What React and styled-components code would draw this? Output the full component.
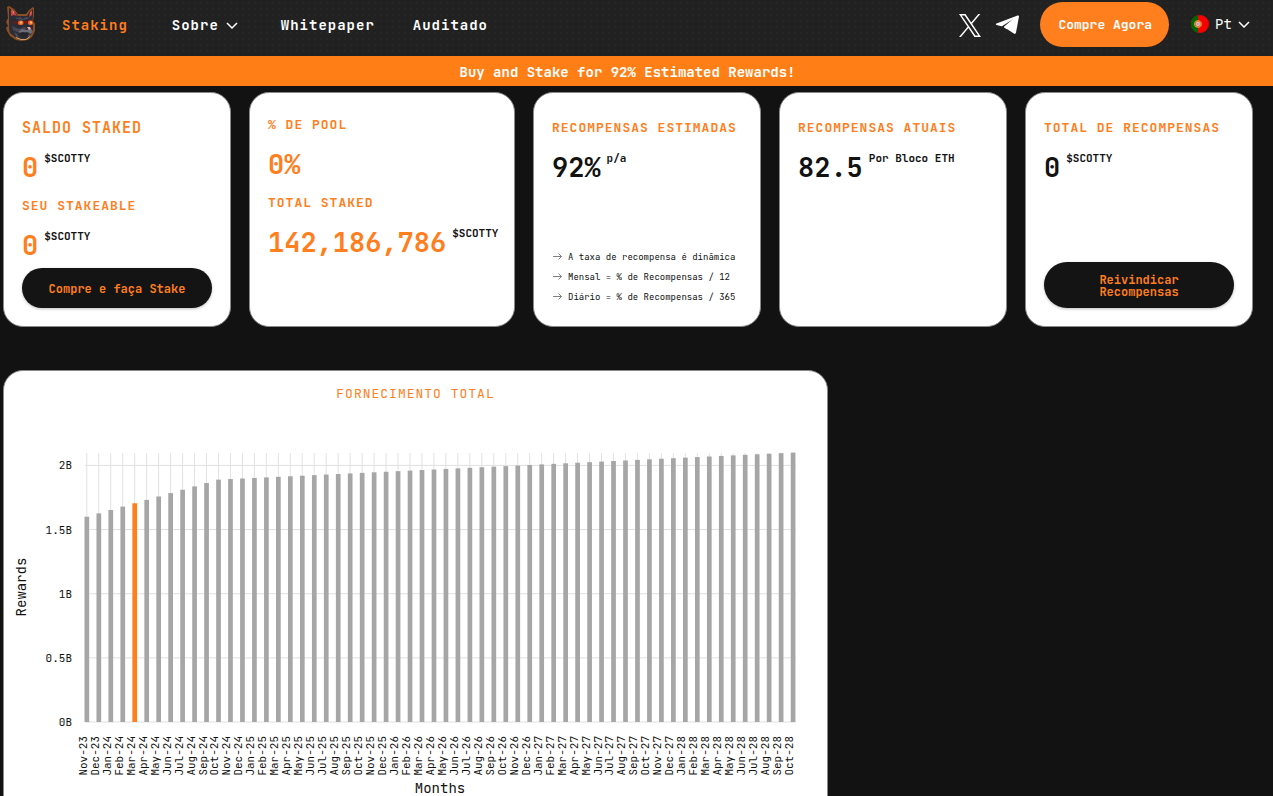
import * as React from "react"
import styled, { createGlobalStyle } from "styled-components"

const GlobalStyle = createGlobalStyle`
    * {
        box-sizing: border-box;
    }
    body {
        margin: 0;
        background: #121212;
        font-family: "JetBrains Mono", "DejaVu Sans Mono", monospace;
        color: #121212;
    }
    button, select {
        font-family: inherit;
        border: none;
        cursor: pointer;
    }
`

const Header = styled.header`
    display: flex;
    align-items: center;
    justify-content: space-between;
    height: 56px;
    padding: 0 23px 8px 4px;
    background-color: #212121;
    background-image: radial-gradient(circle, #262626 1px, transparent 1px);
    background-size: 6px 6px;
`

const Nav = styled.nav`
    display: flex;
    align-items: center;
    gap: 38px;
`

const LogoLink = styled.a`
    display: flex;
    margin-right: -14px;
`

const NavLink = styled.a`
    padding-top: 2px;
    color: ${props => props.$active ? "#ff7e1d" : "white"};
    font-size: 14px;
    font-weight: bold;
    letter-spacing: 1px;
    text-decoration: none;
`

const NavMenu = styled.button`
    display: flex;
    align-items: center;
    gap: 7px;
    padding: 2px 5px 0 6px;
    background: none;
    color: white;
    font-size: 14px;
    font-weight: bold;
    letter-spacing: 1px;
`

const HeaderRight = styled.div`
    display: flex;
    align-items: center;
`

const SocialLink = styled.a`
    display: flex;
    margin-right: 14px;
    padding-top: 2px;
    color: white;
`

const BuyButton = styled.button`
    height: 45px;
    margin: 0 22px 0 6px;
    padding: 0 17px 0 18px;
    border-radius: 24px;
    background: #ff7e1d;
    color: white;
    font-size: 13px;
    font-weight: bold;
`

const Language = styled.label`
    display: flex;
    align-items: center;
    gap: 6px;
    color: white;
`

const LanguageSelect = styled.select`
    appearance: none;
    padding: 0;
    background: none;
    color: white;
    font-size: 14px;
    option {
        color: #121212;
    }
`

const Banner = styled.div`
    height: 30px;
    padding: 1px 18px 0 0;
    background: #ff7f16;
    color: white;
    font-size: 14px;
    font-weight: bold;
    line-height: 30px;
    text-align: center;
`

const Content = styled.main`
    padding: 6px 20px 0 3px;
`

const Cards = styled.div`
    display: grid;
    grid-template-columns: minmax(0, 6fr) minmax(0, 7fr) repeat(3, minmax(0, 6fr));
    gap: 18px;
    @media (max-width: 1080px) {
        grid-template-columns: repeat(auto-fit, minmax(266px, 1fr));
    }
`

const Card = styled.section`
    display: flex;
    flex-direction: column;
    padding: ${props => props.$raised ? "22px" : "25px"} 18px 18px;
    border: 1px solid #8a8a8a;
    border-radius: 20px;
    background: white;
`

const Stack = styled.div`
    display: flex;
    flex-direction: column;
    gap: 10px;
    margin-bottom: 4px;
`

const Label = styled.h2`
    margin: 0;
    color: #ff7e1d;
    font-size: ${props => props.$large ? "15px" : "13px"};
    font-weight: bold;
    letter-spacing: 1px;
    line-height: 20px;
    white-space: nowrap;
`

const Amount = styled.div`
    display: flex;
    align-items: flex-start;
    gap: 6px;
    color: ${props => props.$dark ? "#121212" : "#ff7e1d"};
    font-size: 27px;
    font-weight: bold;
    line-height: 38px;
`

const Unit = styled.span`
    color: #121212;
    font-size: 11px;
    line-height: 20px;
    white-space: nowrap;
`

const CardButton = styled.button`
    width: 100%;
    min-height: 40px;
    margin-top: auto;
    padding: ${props => props.$tall ? "12px 40px 10px" : "1px 0 0"};
    border-radius: 24px;
    background: #141414;
    color: #ff7e1d;
    box-shadow: 0 1px 3px rgba(0, 0, 0, 0.25);
    font-size: 12px;
    font-weight: bold;
    line-height: 12px;
`

const Notes = styled.ul`
    margin: auto 0 0;
    padding: 0 0 1px;
    list-style: none;
`

const Note = styled.li`
    display: flex;
    align-items: center;
    gap: 5px;
    font-size: 9px;
    line-height: 20px;
    white-space: nowrap;
`

const ChartCard = styled.section`
    width: 66%;
    margin-top: 43px;
    border: 1px solid #8a8a8a;
    border-radius: 20px;
    background: white;
`

const ChartTitle = styled.h2`
    margin: 0;
    padding-top: 13px;
    color: #ff7e1d;
    font-size: 13px;
    font-weight: normal;
    letter-spacing: 1px;
    line-height: 20px;
    text-align: center;
`

const ChartSvg = styled.svg`
    display: block;
    width: 100%;
    font-size: 11px;
    fill: #121212;
`

const AxisName = styled.text`
    font-size: 14px;
`

const MONTHS = ["Jan", "Feb", "Mar", "Apr", "May", "Jun", "Jul", "Aug", "Sep", "Oct", "Nov", "Dec"]
const CURRENT_MONTH = "Mar-24"

// supply grows fast during the first year, then slowly up to 2.1B
const supply = Array.from({ length: 60 }, (_, i) => {
    const month = i + 10
    return {
        name: `${MONTHS[month % 12]}-${23 + Math.floor(month / 12)}`,
        value: i <= 11 ? 1.6 + (0.289 * i) / 11 : 1.889 + (0.211 * (i - 11)) / 48,
    }
})

const PLOT = { left: 81, right: 792, top: 49, bottom: 318 }
const BILLION = 128.3
const STEP = 11.97
const barX = i => 82.8 + i * STEP
const valueY = v => PLOT.bottom - v * BILLION

const SupplyChart = () => (
    <ChartSvg viewBox="0 0 823 420" role="img" aria-label="Fornecimento total">
        {supply.map((m, i) => (
            <line key={m.name} x1={barX(i)} x2={barX(i)} y1={PLOT.top} y2={PLOT.bottom} stroke="#e2e2e2" />
        ))}
        {[0, 0.5, 1, 1.5, 2].map(v => (
            <g key={v}>
                <line x1={PLOT.left} x2={PLOT.right} y1={valueY(v)} y2={valueY(v)} stroke="#e0e0e0" />
                <text x="68" y={valueY(v) + 4} textAnchor="end">{v}B</text>
            </g>
        ))}
        {supply.map((m, i) => (
            <g key={m.name}>
                <rect
                    x={barX(i) - 2.3}
                    y={valueY(m.value)}
                    width="4.7"
                    height={m.value * BILLION}
                    fill={m.name === CURRENT_MONTH ? "#ff7e1d" : "#a6a6a6"}
                />
                <text transform={`translate(${barX(i)} 332) rotate(-90)`} textAnchor="end">{m.name}</text>
            </g>
        ))}
        <AxisName transform="translate(22 183) rotate(-90)" textAnchor="middle">Rewards</AxisName>
        <AxisName x="436" y="389" textAnchor="middle">Months</AxisName>
    </ChartSvg>
)

const Logo = () => (
    <svg width="34" height="40" viewBox="4 4 34 40">
        <path d="M7 7l2-1 5 3 4 5h8l3-4 4-3 1 1v8l-1 4 2 4v7l-3 6-4 3-6 1-6-1-6-4-3-5-1-3 2-2-2-4 2-4z" fill="#8a4f22" />
        <path d="M9 8l5 3 4 5h9l3-5 3-2v8l-1 5 1 4v5l-3 5-4 3h-5l-6-2-5-4-1-4V18z" fill="#2c2c36" />
        <path d="M11 9l3 2 3 5-3-1-3 1zM32 10l-2 2-1 5 3-2z" fill="#c8423f" />
        <path d="M12 10l2 2v2zM31.500 11l-1 2v2z" fill="#ff9d8e" />
        <path d="M15 17l3 1 2-1 3 2 3-2 4 1-3 1-4 1-6-1z" fill="#4b4b58" />
        <path d="M12 26l4 2 4 1 4-2 3 1-4 3-6 1-4-2z" fill="#484855" />
        <path d="M12 21l5 1 14-2 3 1-1 2-6 1-3-1-3 2-5-1-4-2z" fill="#6b1b12" />
        <rect x="18" y="20.500" width="5.500" height="4.500" rx="2" fill="#ee6526" />
        <rect x="28" y="20.500" width="5" height="4.500" rx="2" fill="#ee6526" />
        <path d="M20 21.500h2v2h-2zM30 21.500h2v2h-2z" fill="#ffb983" />
        <path d="M18 32l4-3 4 1 5-1 2 2-2 3-4-2-5 2z" fill="#6d6c78" />
        <path d="M19 33l4-1 5 1-2 4-5-1z" fill="#25252d" />
        <path d="M14 32l3 2 2 4-3-2zM28 35l3-1-2 4z" fill="#515160" />
        <path d="M27 27h3l1 2-2 1z" fill="#f2aaa6" />
        <path d="M16 37.500l5 2h5l4-3" fill="none" stroke="#cf9a6c" />
    </svg>
)

const Chevron = () => (
    <svg width="12" height="8" viewBox="0 0 12 8" fill="none" stroke="white" strokeWidth="1.5">
        <path d="M1 2l5 5 5-5" />
    </svg>
)

const XLogo = () => (
    <svg width="22" height="23" viewBox="0 0 300 300" preserveAspectRatio="none" fill="currentColor">
        <path d="M178.57 127.15L290.27 0h-26.46l-97.03 110.38L89.34 0H0l117.13 166.93L0 300h26.46l102.4-116.34L210.66 300H300zM36.01 19.54h40.65l187.13 262.13h-40.66z" />
    </svg>
)

const TelegramLogo = () => (
    <svg width="25" height="20" viewBox="0 0 25 20" fill="currentColor">
        <path d="M22.600.500q1.600-.5 1.400 1.100L21 17.600q-.5 2-2.200.9L9.300 12.300q-.4-.5.100-1L18.200 4 7.400 11.100q-.5.3-1 .2L1.500 9.900q-1.400-.7 0-1.400z" />
        <path d="M9 12.400l9.200-8.200L12 14.300z" />
    </svg>
)

const Flag = () => (
    <svg width="18" height="18" viewBox="0 0 18 18">
        <circle cx="9" cy="9" r="9" fill="#f80000" />
        <path d="M7 .2A9 9 0 0 0 7 17.8z" fill="#006600" />
        <circle cx="7" cy="9" r="3.800" fill="#e8a62c" />
        <path d="M4 7l6 5M4 11l6-5" stroke="#c8441c" strokeWidth=".6" />
        <path d="M5 6.8h4v3a2 2 0 0 1-4 0z" fill="#f4e6e6" stroke="#e8502c" strokeWidth=".8" />
        <path d="M7 8v2.500" stroke="#5570b9" />
    </svg>
)

const Arrow = () => (
    <svg width="11" height="10" viewBox="0 0 11 10" fill="none" stroke="#808080">
        <path d="M1 4.500h8.500M6.500 1.500l3 3-3 3" />
    </svg>
)

const App = () => {
    return (
        <>
            <GlobalStyle />
            <Header>
                <Nav>
                    <LogoLink href="#" aria-label="Scotty"><Logo /></LogoLink>
                    <NavLink href="#" $active>Staking</NavLink>
                    <NavMenu>Sobre<Chevron /></NavMenu>
                    <NavLink href="#">Whitepaper</NavLink>
                    <NavLink href="#">Auditado</NavLink>
                </Nav>
                <HeaderRight>
                    <SocialLink href="#" aria-label="X"><XLogo /></SocialLink>
                    <SocialLink href="#" aria-label="Telegram"><TelegramLogo /></SocialLink>
                    <BuyButton>Compre Agora</BuyButton>
                    <Language>
                        <Flag />
                        <LanguageSelect aria-label="Idioma" defaultValue="Pt">
                            <option>Pt</option>
                            <option>En</option>
                        </LanguageSelect>
                        <Chevron />
                    </Language>
                </HeaderRight>
            </Header>
            <Banner>Buy and Stake for 92% Estimated Rewards!</Banner>
            <Content>
                <Cards>
                    <Card>
                        <Stack>
                            <Label $large>SALDO STAKED</Label>
                            <Amount>0<Unit>$SCOTTY</Unit></Amount>
                            <Label>SEU STAKEABLE</Label>
                            <Amount>0<Unit>$SCOTTY</Unit></Amount>
                        </Stack>
                        <CardButton>Compre e faça Stake</CardButton>
                    </Card>
                    <Card $raised>
                        <Stack>
                            <Label>% DE POOL</Label>
                            <Amount>0%</Amount>
                            <Label>TOTAL STAKED</Label>
                            <Amount>142,186,786<Unit>$SCOTTY</Unit></Amount>
                        </Stack>
                    </Card>
                    <Card>
                        <Stack>
                            <Label>RECOMPENSAS ESTIMADAS</Label>
                            <Amount $dark>92%<Unit>p/a</Unit></Amount>
                        </Stack>
                        <Notes>
                            <Note><Arrow />A taxa de recompensa é dinâmica</Note>
                            <Note><Arrow />Mensal = % de Recompensas / 12</Note>
                            <Note><Arrow />Diário = % de Recompensas / 365</Note>
                        </Notes>
                    </Card>
                    <Card>
                        <Stack>
                            <Label>RECOMPENSAS ATUAIS</Label>
                            <Amount $dark>82.5<Unit>Por Bloco ETH</Unit></Amount>
                        </Stack>
                    </Card>
                    <Card>
                        <Stack>
                            <Label>TOTAL DE RECOMPENSAS</Label>
                            <Amount $dark>0<Unit>$SCOTTY</Unit></Amount>
                        </Stack>
                        <CardButton $tall>Reivindicar Recompensas</CardButton>
                    </Card>
                </Cards>
                <ChartCard>
                    <ChartTitle>FORNECIMENTO TOTAL</ChartTitle>
                    <SupplyChart />
                </ChartCard>
            </Content>
        </>
    )
}

export default App
